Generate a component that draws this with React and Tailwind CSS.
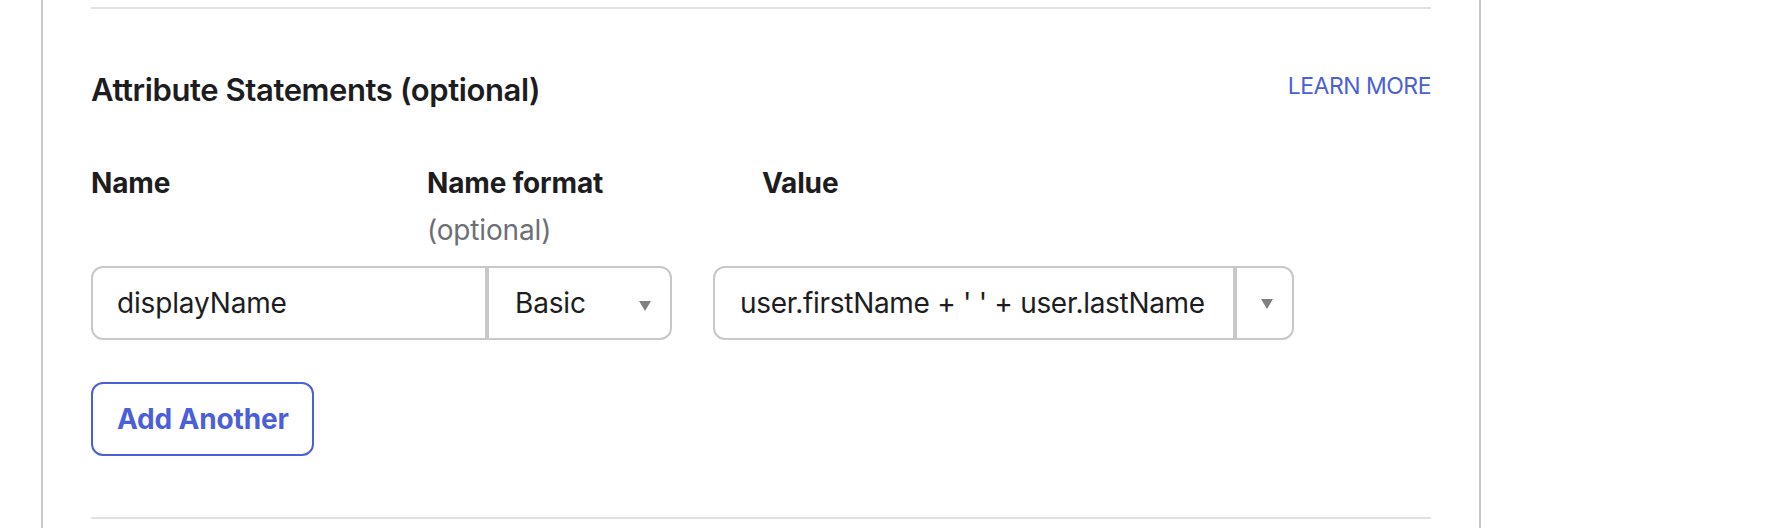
import React from 'react'

function Caret({ className = '' }) {
  return (
    <svg width="12" height="10" viewBox="0 0 12 10" className={className}>
      <path d="M0 0h12L6 10z" fill="#808080" />
    </svg>
  )
}

export default function App() {
  const label = "text-[28px] leading-[40px] font-bold"

  return (
    <div className="w-[1776px] h-[528px] bg-white flex overflow-hidden font-['Inter',sans-serif] text-[#1d1d21] tracking-[-0.01em]">
      <div className="w-[41px] shrink-0" />
      <div className="w-[1440px] shrink-0 border-x-2 border-[#c8c8c8] px-12 pt-[7px]">
        <div className="h-[2px] bg-[#e1e1e1]" />

        <div className="flex justify-between items-start mt-[60px]">
          <h2 className="text-[31px] leading-[36px] font-semibold mt-[3px] tracking-[-0.4px]">Attribute Statements (optional)</h2>
          <a href="#" className="text-[23px] leading-[32px] tracking-[-0.5px] mt-[1px] text-[#4b5fd8]">LEARN MORE</a>
        </div>

        <div className="grid grid-cols-[336px_335px_335px] mt-[55px]">
          <div className={label}>Name</div>
          <div>
            <div className={label}>Name format</div>
            <div className="mt-[7px] text-[28px] leading-[40px] text-[#6e6e78]">(optional)</div>
          </div>
          <div className={label}>Value</div>
        </div>

        <div className="flex mt-4 h-[74px] text-[28px]">
          <div className="w-[396px] border-2 border-[#c8c8c8] rounded-l-[12px] flex items-center pl-6">
            displayName
          </div>
          <div className="w-[185px] border-2 border-[#c8c8c8] rounded-r-[12px] flex items-center justify-between pl-[26px] pr-[19px]">
            <span>Basic</span>
            <Caret className="mt-[5px]" />
          </div>
          <div className="w-[522px] ml-[41px] border-2 border-[#c8c8c8] rounded-l-[12px] flex items-center pl-[25px] overflow-hidden whitespace-nowrap">
            <span className="tracking-[-0.3px]">user.firstName + ' ' + user.lastName</span>
          </div>
          <div className="w-[59px] border-2 border-[#c8c8c8] rounded-r-[12px] flex items-center pl-6">
            <Caret className="mt-[1px]" />
          </div>
        </div>

        <button className="mt-[42px] w-[223px] h-[74px] border-2 border-[#4b5fd8] rounded-[12px] text-left pl-[24px] text-[28px] font-bold text-[#4b5fd8]">
          Add Another
        </button>

        <div className="mt-[61px] h-[2px] bg-[#e1e1e1]" />
      </div>
    </div>
  )
}
